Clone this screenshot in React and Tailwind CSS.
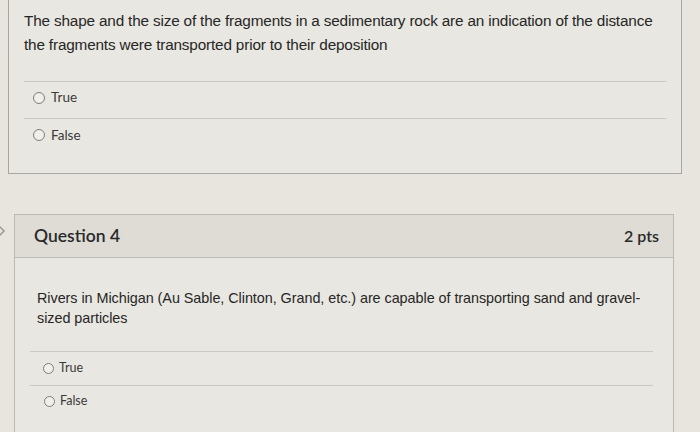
export default function App() {
  const qFont = { fontFamily: '"Liberation Sans", Arial, sans-serif' };
  const lato = { fontFamily: 'Lato, "Open Sans", sans-serif' };

  const Radio = ({ size = 12 }) => (
    <span
      className="inline-block rounded-full border-[1.5px] border-[#7d7d7a] bg-[#f1efea]"
      style={{ width: size, height: size }}
    />
  );

  return (
    <div className="relative w-[700px] h-[432px] overflow-hidden bg-[#e7e5de]">
      {/* Question 3 card (top cut off) */}
      <div className="ml-[8px] w-[674px] border-x border-b border-[#a7a6a0] bg-[#e9e7e1] pb-[22px]">
        <div
          className="pl-[15px] pr-[10px] pt-[9px] text-[15.3px] leading-[24px] tracking-[-0.16px] text-[#262626]"
          style={qFont}
        >
          The shape and the size of the fragments in a sedimentary rock are an indication of the distance
          <br />
          the fragments were transported prior to their deposition
        </div>
        <div className="mx-[15px] mt-[24px] border-t border-[#cbc9c3]">
          <div className="flex items-center gap-[6px] pl-[9px] h-[36px] pb-[5px]" style={lato}>
            <Radio />
            <span className="text-[13.5px] text-[#3a3a3a]">True</span>
          </div>
          <div className="border-t border-[#cbc9c3] flex items-center gap-[6px] pl-[9px] h-[33px]" style={lato}>
            <Radio />
            <span className="text-[13.5px] text-[#3a3a3a]">False</span>
          </div>
        </div>
      </div>

      {/* left chevron */}
      <svg className="absolute left-[-6px] top-[222px]" width="14" height="18" viewBox="0 0 14 18">
        <path d="M2 1 L10 9 L2 17" fill="none" stroke="#9a9994" strokeWidth="1.5" />
      </svg>

      {/* Question 4 card */}
      <div className="ml-[14px] mt-[40px] w-[660px] border border-[#bab9b3] bg-[#e9e7e1]">
        <div
          className="flex items-center justify-between h-[43px] bg-[#dedcd5] border-b border-[#bcbbb5] pl-[19px] pr-[14px]"
          style={lato}
        >
          <span className="text-[17.5px] font-semibold text-[#2a2a2a]">Question 4</span>
          <span className="text-[16px] font-semibold text-[#2a2a2a]">2 pts</span>
        </div>
        <div className="pl-[22px] pr-[14px] pt-[30px] pb-[40px]">
          <div className="text-[14.4px] leading-[20px] tracking-[-0.05px] text-[#262626]" style={qFont}>
            Rivers in Michigan (Au Sable, Clinton, Grand, etc.) are capable of transporting sand and gravel-
            <br />
            sized particles
          </div>
          <div className="ml-[-7px] mr-[6px] mt-[23px] border-t border-[#cbc9c3]">
            <div className="flex items-center gap-[5px] pl-[13px] h-[33px]" style={lato}>
              <Radio size={11} />
              <span className="text-[12.5px] text-[#3a3a3a]">True</span>
            </div>
            <div className="border-t border-[#cbc9c3] flex items-center gap-[5px] pl-[14px] h-[32px]" style={lato}>
              <Radio size={11} />
              <span className="text-[12.5px] text-[#3a3a3a]">False</span>
            </div>
          </div>
        </div>
      </div>
    </div>
  );
}
